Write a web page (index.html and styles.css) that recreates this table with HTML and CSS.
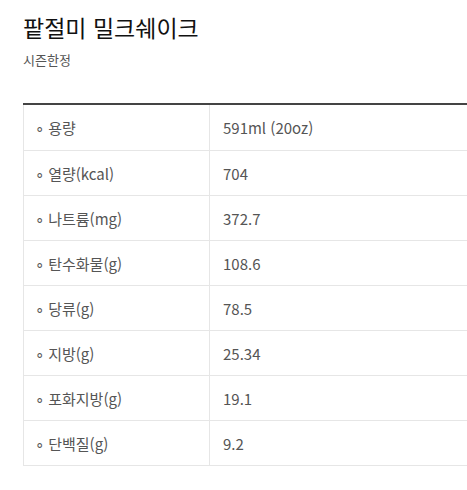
FILE: index.html
```html
<!DOCTYPE html>
<html lang="ko">
<head>
<meta charset="utf-8">
<link rel="stylesheet" href="styles.css">
</head>
<body>
<div class="page">
  <h1 class="title">팥절미 밀크쉐이크</h1>
  <p class="sub">시즌한정</p>
  <table class="nutri">
    <tbody>
      <tr><th>∘ 용량</th><td>591ml (20oz)</td></tr>
      <tr><th>∘ 열량(kcal)</th><td>704</td></tr>
      <tr><th>∘ 나트륨(mg)</th><td>372.7</td></tr>
      <tr><th>∘ 탄수화물(g)</th><td>108.6</td></tr>
      <tr><th>∘ 당류(g)</th><td>78.5</td></tr>
      <tr><th>∘ 지방(g)</th><td>25.34</td></tr>
      <tr><th>∘ 포화지방(g)</th><td>19.1</td></tr>
      <tr><th>∘ 단백질(g)</th><td>9.2</td></tr>
    </tbody>
  </table>
</div>
</body>
</html>
```
FILE: styles.css
```css
html, body { margin: 0; padding: 0; background: #fff; }
.page { padding: 13px 0 0 23px; font-family: "Noto Sans CJK KR", "Noto Sans", sans-serif; }
.title { margin: 0; font-size: 23px; font-weight: 400; line-height: 28px; color: #111; }
.sub { margin: 10px 0 0; font-size: 13px; line-height: 18px; color: #555; }
.nutri { margin-top: 34px; width: 446px; border-collapse: collapse; border-top: 2px solid #444; font-family: "Noto Sans CJK KR", sans-serif; }
.nutri th, .nutri td { height: 44px; padding: 0; border: 1px solid #e6e6e6; font-size: 15px; font-weight: 400; color: #555; text-align: left; vertical-align: middle; }
.nutri tr:first-child th, .nutri tr:first-child td { border-top: 0; height: 45px; }
.nutri th { width: 174px; padding-left: 11px; }
.nutri td { padding-left: 13px; }
```
